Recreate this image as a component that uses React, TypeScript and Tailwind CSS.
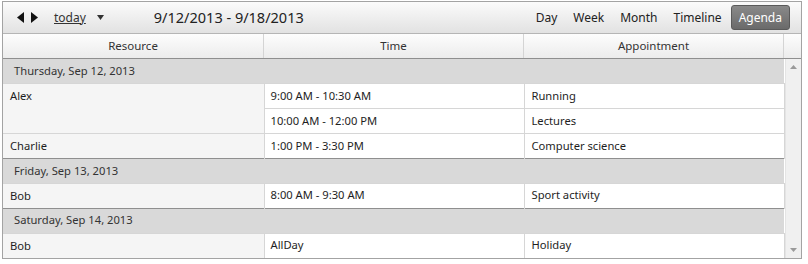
import React from "react"

type Row = { resource?: string; span?: number; time: string; title: string }
type Group = { day: string; rows: Row[] }

const GROUPS: Group[] = [
  {
    day: "Thursday, Sep 12, 2013",
    rows: [
      { resource: "Alex", span: 2, time: "9:00 AM - 10:30 AM", title: "Running" },
      { time: "10:00 AM - 12:00 PM", title: "Lectures" },
      { resource: "Charlie", span: 1, time: "1:00 PM - 3:30 PM", title: "Computer science" },
    ],
  },
  {
    day: "Friday, Sep 13, 2013",
    rows: [{ resource: "Bob", span: 1, time: "8:00 AM - 9:30 AM", title: "Sport activity" }],
  },
  {
    day: "Saturday, Sep 14, 2013",
    rows: [{ resource: "Bob", span: 1, time: "AllDay", title: "Holiday" }],
  },
]

const VIEWS = ["Day", "Week", "Month", "Timeline", "Agenda"]

export default function App() {
  return (
    <div
      className="bg-white w-[808px] h-[264px] pl-[2px] pt-[1px] text-[#1e1e1e]"
      style={{ fontFamily: '"Segoe UI", "Noto Sans", sans-serif' }}
    >
      <div className="w-[800px] h-[258px] border border-[#a3a3a3] flex flex-col overflow-hidden">
        {/* Toolbar */}
        <div className="h-[32px] shrink-0 flex items-center bg-gradient-to-b from-[#fbfbfb] to-[#e2e2e2] border-b border-[#b5b5b5]">
          <div className="flex items-center gap-[7px] pl-[14px]">
            <svg width="7" height="11" viewBox="0 0 7 11">
              <path d="M7 0 L7 11 L0 5.5 Z" fill="#111" />
            </svg>
            <svg width="7" height="11" viewBox="0 0 7 11">
              <path d="M0 0 L0 11 L7 5.5 Z" fill="#111" />
            </svg>
          </div>
          <span className="ml-[16px] text-[12px] underline text-[#333]">today</span>
          <svg className="ml-[11px]" width="7" height="5" viewBox="0 0 7 5">
            <path d="M0 0 L7 0 L3.5 5 Z" fill="#333" />
          </svg>
          <span className="ml-[50px] text-[14.5px] text-[#222]">9/12/2013 - 9/18/2013</span>
          <div className="ml-auto flex items-center pr-[11px] text-[12px]">
            {VIEWS.map((v) =>
              v === "Agenda" ? (
                <span
                  key={v}
                  className="ml-[1px] px-[7px] h-[25px] flex items-center rounded-[3px] border border-[#5a5a5a] bg-gradient-to-b from-[#8a8a8a] to-[#6a6a6a] text-white"
                >
                  {v}
                </span>
              ) : (
                <span key={v} className="px-[8px] h-[25px] flex items-center text-[#222]">
                  {v}
                </span>
              )
            )}
          </div>
        </div>

        {/* Column header */}
        <div className="h-[25px] shrink-0 flex text-[11.5px] text-[#333] bg-gradient-to-b from-[#fdfdfd] to-[#ececec] border-b border-[#8f8f8f]">
          <div className="w-[261px] flex items-center justify-center border-r border-[#d4d4d4]">Resource</div>
          <div className="w-[260px] flex items-center justify-center border-r border-[#d4d4d4]">Time</div>
          <div className="w-[260px] flex items-center justify-center border-r border-[#d4d4d4]">Appointment</div>
          <div className="flex-1" />
        </div>

        {/* Body */}
        <div className="flex-1 flex min-h-0">
          <table className="w-[781px] border-collapse text-[11.2px] table-fixed">
            <colgroup>
              <col className="w-[261px]" />
              <col className="w-[260px]" />
              <col className="w-[260px]" />
            </colgroup>
            <tbody>
              {GROUPS.map((g, gi) => (
                <React.Fragment key={g.day}>
                  <tr className={gi > 0 ? "border-t border-[#8f8f8f]" : ""}>
                    <td colSpan={3} className="h-[24px] bg-[#d9d9d9] pl-[11px] text-[#333] align-middle">
                      {g.day}
                    </td>
                  </tr>
                  {g.rows.map((r, ri) => (
                    <tr key={ri} className="border-t border-[#d6d6d6]">
                      {r.resource && (
                        <td
                          rowSpan={r.span}
                          className="bg-[#f5f5f5] border-r border-[#d6d6d6] pl-[7px] align-top pt-[4px] h-[24px]"
                        >
                          {r.resource}
                        </td>
                      )}
                      <td className="h-[24px] pl-[6px] border-r border-[#d6d6d6] align-middle">{r.time}</td>
                      <td className="h-[24px] pl-[7px] border-r border-[#d6d6d6] align-middle">{r.title}</td>
                    </tr>
                  ))}
                </React.Fragment>
              ))}
            </tbody>
          </table>
          {/* Scrollbar */}
          <div className="flex-1 bg-[#f0f0f0] border-l border-[#e4e4e4] flex flex-col items-center justify-between py-[6px]">
            <svg width="7" height="4" viewBox="0 0 7 4">
              <path d="M0 4 L7 4 L3.5 0 Z" fill="#9a9a9a" />
            </svg>
            <svg width="7" height="4" viewBox="0 0 7 4">
              <path d="M0 0 L7 0 L3.5 4 Z" fill="#9a9a9a" />
            </svg>
          </div>
        </div>
      </div>
    </div>
  )
}
